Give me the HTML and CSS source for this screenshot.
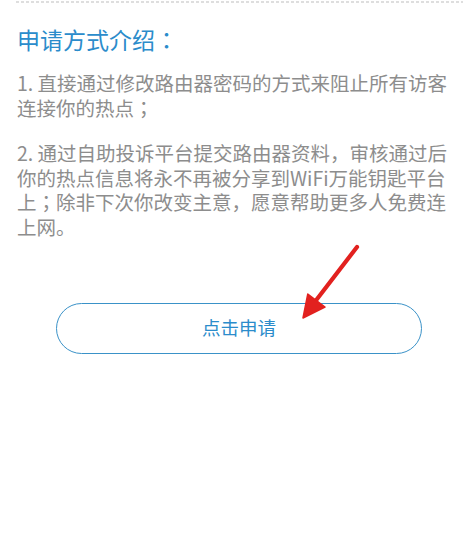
FILE: index.html
```html
<!DOCTYPE html>
<html lang="zh-CN">
<head>
<meta charset="utf-8">
<title>申请方式介绍</title>
<link rel="stylesheet" href="styles.css">
</head>
<body>
<div class="rule"></div>
<h1 class="title">申请方式介绍<span class="punct" lang="zh-TW">：</span></h1>
<p class="text">1. 直接通过修改路由器密码的方式来阻止所有访客连接你的热点<span class="punct" lang="zh-TW">；</span></p>
<p class="text gap">2. 通过自助投诉平台提交路由器资料，审核通过后你的热点信息将永不再被分享到WiFi万能钥匙平台上<span class="punct" lang="zh-TW">；</span>除非下次你改变主意，愿意帮助更多人免费连上网。</p>
<div class="btn-row">
  <button class="apply-btn" type="button">点击申请</button>
</div>
<svg class="arrow" width="468" height="543" viewBox="0 0 468 543" aria-hidden="true">
  <line x1="357" y1="247" x2="314" y2="303" stroke="#e2211f" stroke-width="4.2" stroke-linecap="round"/>
  <polygon points="303,318 307.8,294 325,307" fill="#e2211f" stroke="#e2211f" stroke-width="1.5" stroke-linejoin="round"/>
</svg>
</body>
</html>
```
FILE: styles.css
```css
html, body {
  margin: 0;
  padding: 0;
  background: #ffffff;
}
body {
  position: relative;
  width: 468px;
  height: 543px;
  overflow: hidden;
  font-family: "Noto Sans CJK SC", "Noto Sans", sans-serif;
}
.rule {
  height: 2px;
  margin: 1px 5px 0 16px;
  background: repeating-linear-gradient(to right, #dedede 0 3px, transparent 3px 5px);
}
.title {
  margin: 21px 17px 0;
  font-size: 23px;
  line-height: 30px;
  font-weight: 400;
  color: #2b8ccb;
}
.punct {
  font-family: "Noto Sans CJK TC", "Noto Sans CJK JP", sans-serif;
}
.text {
  margin: 17px 17px 0;
  font-size: 19.5px;
  line-height: 24.7px;
  color: #8d8d8d;
}
.text.gap {
  margin-top: 20.5px;
}
.btn-row {
  display: flex;
  margin: 63px 0 0 56px;
}
.apply-btn {
  width: 366px;
  height: 51px;
  box-sizing: border-box;
  border: 1.5px solid #3a92c8;
  border-radius: 26px;
  background: #ffffff;
  color: #2b8ccb;
  font-family: "Noto Sans CJK SC", "Noto Sans", sans-serif;
  font-size: 18.5px;
  padding: 0 0 2px;
}
.arrow {
  position: absolute;
  left: 0;
  top: 0;
  pointer-events: none;
}
```
